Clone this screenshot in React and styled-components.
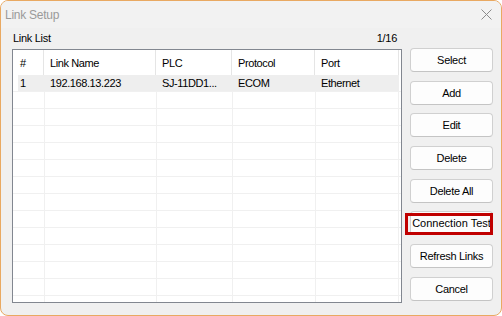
import React from 'react';
import styled, { createGlobalStyle } from 'styled-components';

const Global = createGlobalStyle`
  html, body { margin: 0; padding: 0; background: #ffffff; }
  body { font-family: "Liberation Sans", Arial, sans-serif; }
  * { box-sizing: border-box; }
`;

const Window = styled.div`
  width: 502px;
  height: 316px;
  border: 1px solid #e9a962;
  border-radius: 8px;
  background: #f0f0f0;
  display: flex;
  flex-direction: column;
  overflow: hidden;
`;

const TitleBar = styled.div`
  height: 27px;
  flex: none;
  display: flex;
  align-items: center;
  justify-content: space-between;
  padding: 0 9px 0 4px;
  background: #f2f2f2;
  color: #9a9a9a;
  font-size: 12px;
  letter-spacing: -0.25px;
`;

const CloseIcon = styled.svg`
  display: block;
  width: 11px;
  height: 11px;
  margin-top: -1px;
`;

const Content = styled.div`
  flex: 1;
  display: flex;
  padding: 0 7px 0 11px;
`;

const LeftPanel = styled.div`
  width: 390px;
  display: flex;
  flex-direction: column;
`;

const LabelRow = styled.div`
  height: 21px;
  display: flex;
  align-items: center;
  justify-content: space-between;
  padding: 0 5px 1px 1px;
  font-size: 11px;
  letter-spacing: -0.3px;
  color: #000;
`;

const ListBox = styled.div`
  height: 254px;
  border: 1px solid #828790;
  background: #ffffff;
  display: flex;
  flex-direction: column;
  overflow: hidden;
  font-size: 11px;
  letter-spacing: -0.4px;
  color: #000;
`;

const HeaderRow = styled.div`
  height: 25px;
  flex: none;
  display: flex;
`;

const HeaderCell = styled.div`
  width: ${p => p.$w}px;
  flex: none;
  height: 100%;
  display: flex;
  align-items: center;
  padding-left: ${p => (p.$first ? 7 : 6)}px;
  border-right: 1px solid #e5e5e5;
  white-space: nowrap;
`;

const Rows = styled.div`
  flex: 1;
  overflow: hidden;
`;

const Row = styled.div`
  height: 17px;
  display: flex;
  border-bottom: 1px solid #f0f0f0;
  background: ${p =>
    p.$selected ? 'linear-gradient(to right, transparent 5px, #eeeeee 5px, #eeeeee 386px, transparent 386px)' : 'transparent'};
`;

const Cell = styled.div`
  width: ${p => p.$w}px;
  flex: none;
  display: flex;
  align-items: center;
  padding-left: ${p => (p.$first ? 7 : 5)}px;
  border-left: ${p => (p.$first ? 'none' : `1px solid ${p.$selected ? '#eeeeee' : '#f0f0f0'}`)};
  border-right: ${p => (p.$last ? `1px solid ${p.$selected ? '#eeeeee' : '#f0f0f0'}` : 'none')};
  white-space: nowrap;
  overflow: hidden;
`;

const ButtonColumn = styled.div`
  width: 83px;
  margin-left: 8px;
  padding-top: 20px;
  display: flex;
  flex-direction: column;
  gap: 8.7px;
`;

const Button = styled.div`
  position: relative;
  height: 24px;
  display: flex;
  align-items: center;
  justify-content: center;
  background: #fdfdfd;
  border: 1px solid #d0d0d0;
  border-bottom-color: #c4c4c4;
  border-radius: 4px;
  font-size: 11px;
  letter-spacing: ${p => (p.$wide ? '0px' : '-0.3px')};
  color: #000;
  white-space: nowrap;
`;

const HighlightFrame = styled.div`
  position: absolute;
  left: -6px;
  right: -1px;
  top: 1px;
  bottom: -1px;
  border: 3px solid #c00000;
  pointer-events: none;
`;

const columns = [
  { key: 'n', title: '#', w: 31 },
  { key: 'name', title: 'Link Name', w: 112 },
  { key: 'plc', title: 'PLC', w: 76 },
  { key: 'proto', title: 'Protocol', w: 83 },
  { key: 'port', title: 'Port', w: 84 },
];

const data = [
  { n: '1', name: '192.168.13.223', plc: 'SJ-11DD1...', proto: 'ECOM', port: 'Ethernet' },
];

const buttons = ['Select', 'Add', 'Edit', 'Delete', 'Delete All', 'Connection Test', 'Refresh Links', 'Cancel'];

export default function App() {
  const rows = [...data];
  while (rows.length < 14) rows.push(null);
  return (
    <>
      <Global />
      <Window>
        <TitleBar>
          <span>Link Setup</span>
          <CloseIcon viewBox="0 0 11 11">
            <path d="M0.5 0.5 L10.5 10.5 M10.5 0.5 L0.5 10.5" stroke="#8c8c8c" strokeWidth="1" fill="none" />
          </CloseIcon>
        </TitleBar>
        <Content>
          <LeftPanel>
            <LabelRow>
              <span>Link List</span>
              <span>1/16</span>
            </LabelRow>
            <ListBox>
              <HeaderRow>
                {columns.map((c, i) => (
                  <HeaderCell key={c.key} $w={c.w} $first={i === 0}>{c.title}</HeaderCell>
                ))}
              </HeaderRow>
              <Rows>
                {rows.map((r, ri) => (
                  <Row key={ri} $selected={ri === 0 && !!r}>
                    {columns.map((c, i) => (
                      <Cell
                        key={c.key}
                        $w={c.w}
                        $first={i === 0}
                        $last={i === columns.length - 1}
                        $selected={ri === 0 && !!r}
                      >
                        {r ? r[c.key] : ''}
                      </Cell>
                    ))}
                  </Row>
                ))}
              </Rows>
            </ListBox>
          </LeftPanel>
          <ButtonColumn>
            {buttons.map(b => (
              <Button key={b} $wide={b === 'Connection Test'}>
                {b}
                {b === 'Connection Test' && <HighlightFrame />}
              </Button>
            ))}
          </ButtonColumn>
        </Content>
      </Window>
    </>
  );
}
